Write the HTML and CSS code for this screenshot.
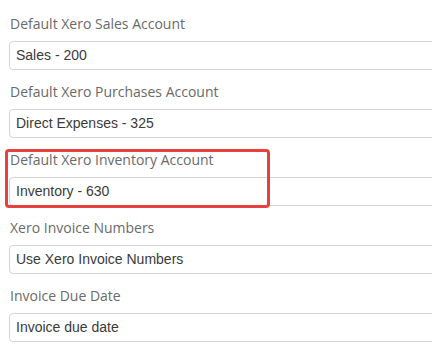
FILE: index.html
```html
<!DOCTYPE html>
<html>
  <head>
    <meta charset="UTF-8" />
    <title>Xero Settings</title>
    <link rel="stylesheet" href="styles.css">
  </head>
  <body>
    <form class="settings">
      <div class="field">
        <label for="sales">Default Xero Sales Account</label>
        <div class="select" id="sales">Sales - 200</div>
      </div>

      <div class="field">
        <label for="purchases">Default Xero Purchases Account</label>
        <div class="select" id="purchases">Direct Expenses - 325</div>
      </div>

      <div class="field">
        <div class="highlight"></div>
        <label for="inventory">Default Xero Inventory Account</label>
        <div class="select" id="inventory">Inventory - 630</div>
      </div>

      <div class="field">
        <label for="numbers">Xero Invoice Numbers</label>
        <div class="select" id="numbers">Use Xero Invoice Numbers</div>
      </div>

      <div class="field">
        <label for="due">Invoice Due Date</label>
        <div class="select" id="due">Invoice due date</div>
      </div>
    </form>
  </body>
</html>
```

FILE: styles.css
```css
* {
  box-sizing: border-box;
}

body {
  margin: 0;
  padding: 0;
  background-color: #fff;
  overflow: hidden;
}

.settings {
  padding: 13px 0 0 9px;
}

.field {
  position: relative;
  margin-bottom: 11px;
}

.field label {
  display: block;
  margin-left: 1px;
  margin-bottom: 7px;
  font-family: "Open Sans", sans-serif;
  font-weight: 400;
  font-size: 14px;
  line-height: 21px;
  color: #6a6a6a;
}

.select {
  width: 500px;
  height: 29px;
  padding: 0 6px;
  border: 1px solid #d4d4d4;
  border-radius: 4px;
  background-color: #fff;
  font-family: "Liberation Sans", Arial, sans-serif;
  font-size: 14px;
  line-height: 27px;
  color: #3a3a3a;
}

/* recuadro rojo sobre la cuenta de inventario */
.highlight {
  position: absolute;
  left: -4px;
  top: 0;
  width: 265px;
  height: 59px;
  border: 3px solid #e8403f;
  border-radius: 4px;
  z-index: 1;
}
```
